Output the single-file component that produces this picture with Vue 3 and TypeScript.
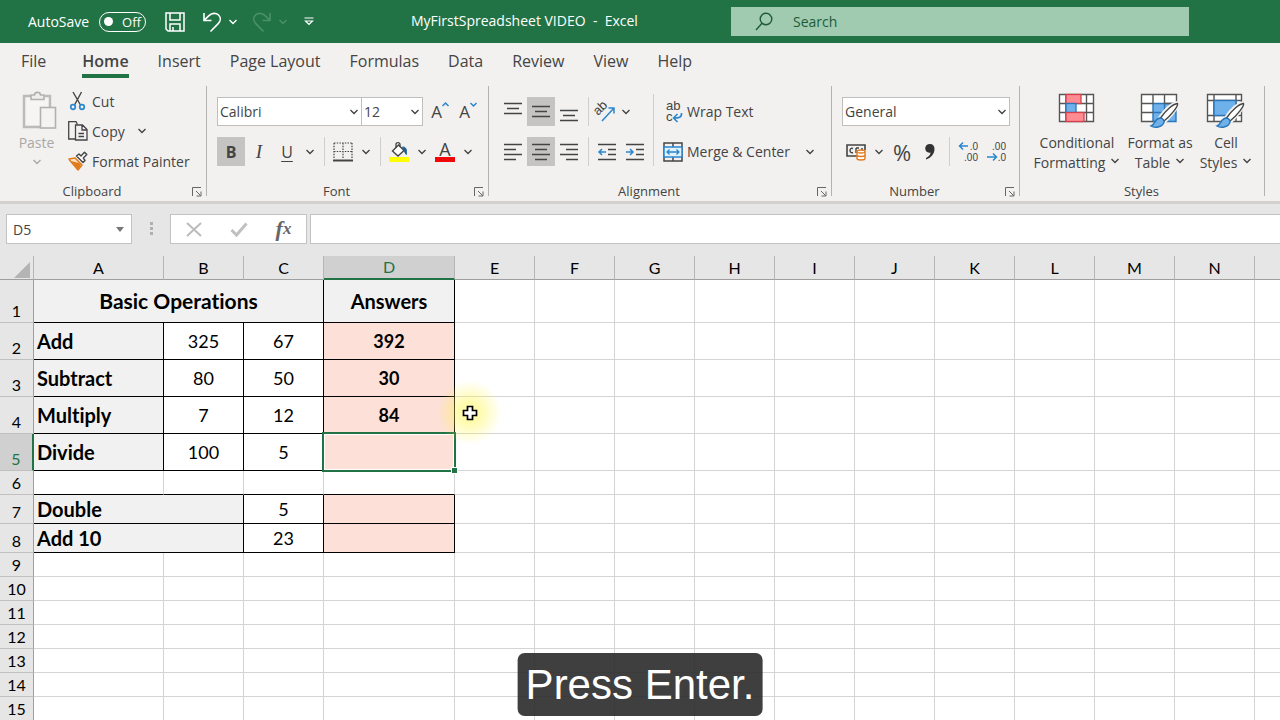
<script setup lang="ts">
import { h, ref } from 'vue'

interface Cell {
  key: string
  text?: string
  kind?: string
  span?: number
  selected?: boolean
}
interface Row {
  n: number
  size: string
  cells: Cell[]
}

const Chevron = () =>
  h('svg', { class: 'chevron', viewBox: '0 0 10 6', 'aria-hidden': 'true' }, [
    h('path', { d: 'M1.5 1 L5 4.5 L8.5 1', fill: 'none', stroke: 'currentColor', 'stroke-width': '1.4' }),
  ])

const Launcher = () =>
  h('svg', { class: 'launcher', viewBox: '0 0 10 10', 'aria-hidden': 'true' }, [
    h('path', {
      d: 'M0.5 9 V0.5 H9 M4 4 L8.5 8.5 M9 4.5 V9 H4.5',
      fill: 'none',
      stroke: 'currentColor',
      'stroke-width': '1',
    }),
  ])

const tabs = ['File', 'Home', 'Insert', 'Page Layout', 'Formulas', 'Data', 'Review', 'View', 'Help']
const activeTab = ref('Home')
const autoSave = ref(false)
const fontName = ref('Calibri')
const fontSize = ref('12')
const numberFormat = ref('General')
const cellName = ref('D5')
const formula = ref('')
const search = ref('')

const columns = 'ABCDEFGHIJKLMN'.split('')
const blanks = (n: number, from: string): Cell[] =>
  [...columns.slice(columns.indexOf(from)), 'O'].map((c) => ({ key: c + n }))

const operation = (n: number, label: string, a: string, b: string, answer = '', selected = false): Row => ({
  n,
  size: 'tall',
  cells: [
    { key: 'A' + n, text: label, kind: 'boxed label' },
    { key: 'B' + n, text: a, kind: 'boxed' },
    { key: 'C' + n, text: b, kind: 'boxed' },
    { key: 'D' + n, text: answer, kind: 'boxed answer', selected },
    ...blanks(n, 'E'),
  ],
})
const single = (n: number, label: string, value: string): Row => ({
  n,
  size: 'medium',
  cells: [
    { key: 'A' + n, text: label, kind: 'boxed label', span: 2 },
    { key: 'C' + n, text: value, kind: 'boxed' },
    { key: 'D' + n, kind: 'boxed answer' },
    ...blanks(n, 'E'),
  ],
})

const rows: Row[] = [
  {
    n: 1,
    size: 'title-row',
    cells: [
      { key: 'A1', text: 'Basic Operations', kind: 'boxed heading large', span: 3 },
      { key: 'D1', text: 'Answers', kind: 'boxed heading' },
      ...blanks(1, 'E'),
    ],
  },
  operation(2, 'Add', '325', '67', '392'),
  operation(3, 'Subtract', '80', '50', '30'),
  operation(4, 'Multiply', '7', '12', '84'),
  operation(5, 'Divide', '100', '5', '', true),
  { n: 6, size: 'short', cells: blanks(6, 'A').map((c, i) => (i < 4 ? { ...c, kind: 'ruled' } : c)) },
  single(7, 'Double', '5'),
  single(8, 'Add 10', '23'),
  ...[9, 10, 11, 12, 13, 14, 15].map((n) => ({ n, size: 'short', cells: blanks(n, 'A') })),
]
</script>

<template>
  <div class="app">
    <header class="titlebar">
      <div class="quick">
        <span id="autosave">AutoSave</span>
        <button class="switch" role="switch" :aria-checked="autoSave" aria-labelledby="autosave" @click="autoSave = !autoSave">
          <i class="knob"></i>{{ autoSave ? 'On' : 'Off' }}
        </button>
        <button class="save" aria-label="Save">
          <svg width="22" height="22" viewBox="0 0 22 22" fill="none" stroke="currentColor" stroke-width="1.5">
            <path d="M2 2 H20 V20 H4 L2 18 Z M6 2 V9 H16 V2 M6 20 V13 H16 V20 M9 20 V16" />
          </svg>
        </button>
        <button class="undo" aria-label="Undo">
          <svg width="20" height="22" viewBox="0 0 20 22" fill="none" stroke="currentColor" stroke-width="1.6">
            <path d="M2 2 V9.5 H9.5 M2.2 9.2 L7 4.6 C10 1.8 14 1.6 16.5 4 C19 6.5 18.8 10 16.2 12.6 L8.5 20.5" />
          </svg>
          <Chevron />
        </button>
        <button class="redo" aria-label="Redo">
          <svg width="20" height="22" viewBox="0 0 20 22" fill="none" stroke="currentColor" stroke-width="1.6">
            <path d="M18 2 V9.5 H10.5 M17.8 9.2 L13 4.6 C10 1.8 6 1.6 3.5 4 C1 6.5 1.2 10 3.8 12.6 L11.5 20.5" />
          </svg>
          <Chevron />
        </button>
        <button class="customize" aria-label="Customize Quick Access Toolbar">
          <svg width="10" height="9" viewBox="0 0 10 9" fill="none" stroke="currentColor" stroke-width="1.2">
            <path d="M0.5 1 H9.5 M1.5 4 H8.5 L5 7.5 Z" />
          </svg>
        </button>
      </div>
      <div class="doc">MyFirstSpreadsheet VIDEO&nbsp; -&nbsp; Excel</div>
      <label class="search">
        <svg width="18" height="19" viewBox="0 0 18 19" fill="none" stroke="currentColor" stroke-width="1.4">
          <circle cx="11" cy="7" r="5.8" />
          <path d="M7 11.2 L1 18" />
        </svg>
        <input v-model="search" type="search" placeholder="Search" aria-label="Search" />
      </label>
    </header>

    <nav class="tabs">
      <button v-for="t in tabs" :key="t" :class="{ active: t === activeTab }" @click="activeTab = t">{{ t }}</button>
    </nav>

    <section class="ribbon">
      <div class="group clipboard">
        <div class="body">
          <button class="paste">
            <svg width="36" height="40" viewBox="0 0 36 40" fill="none" stroke="#b3b1af" stroke-width="1.6">
              <path d="M9 5 H2 V36 H18 M23 5 H28 V16" stroke="#bdbbb9" stroke-width="2.4" />
              <path d="M4.500 7 H26 V16 H18 V34 H4.500 Z" fill="#f6f5f4" stroke="none" />
              <path d="M9 8.500 V4 H12.500 C12.500 0.500 18.500 0.500 18.500 4 H22 V8.500 Z" fill="#efeeed" />
              <rect x="18.500" y="16.500" width="15" height="20.500" fill="#f4f3f2" />
            </svg>
            <span>Paste</span>
            <Chevron />
          </button>
          <div class="stack">
            <button>
              <svg width="20" height="20" viewBox="0 0 20 20" fill="none" stroke-width="1.4">
                <path d="M5 1 L12.500 14 M13.500 1 L6.500 14" stroke="#444" />
                <circle cx="5" cy="16" r="2.300" stroke="#2a86cf" stroke-width="1.700" />
                <circle cx="14" cy="16" r="2.300" stroke="#2a86cf" stroke-width="1.700" />
              </svg>
              Cut
            </button>
            <button>
              <svg width="20" height="20" viewBox="0 0 20 20" fill="none" stroke="#444" stroke-width="1.300">
                <path d="M7 18 H0.700 V0.700 H8 L9.500 3.500" />
                <path d="M7.500 4 H14.500 L19 8.500 V19 H7.500 Z M14 4 V9 H19 M10.500 12.500 H16 M10.500 15.500 H16" />
              </svg>
              Copy
              <Chevron class="after" />
            </button>
            <button>
              <svg width="20" height="20" viewBox="0 0 20 20" fill="none" stroke-linejoin="round">
                <path d="M1 8 L7 7 L14 14 L10 19 L1.500 9 Z" fill="#fbe3cd" stroke="#e07b1c" stroke-width="1.500" />
                <path d="M3 10 L11 12 L13 14 L10 18.500 Z" fill="#e07b1c" />
                <path d="M8.500 5 L11 3 L13 5 L16.500 1.200 L18.800 3.500 L15.300 7 L17 9.500 L15 11.500 Z" fill="#fff" stroke="#444" stroke-width="1.400" />
              </svg>
              Format Painter
            </button>
          </div>
        </div>
        <footer>Clipboard<button aria-label="Clipboard settings"><Launcher /></button></footer>
      </div>

      <div class="group font">
        <div class="body rows">
          <div class="row">
            <label class="picker name">
              <select v-model="fontName" aria-label="Font"><option>Calibri</option></select><Chevron />
            </label>
            <label class="picker size">
              <select v-model="fontSize" aria-label="Font size"><option>12</option></select><Chevron />
            </label>
            <button class="tool grow" aria-label="Increase font size">
              <span>A</span>
              <svg width="7" height="5" viewBox="0 0 7 5" fill="none" stroke="#2a86cf" stroke-width="1.500"><path d="M0.500 4 L3.500 1 L6.500 4" /></svg>
            </button>
            <button class="tool grow" aria-label="Decrease font size">
              <span>A</span>
              <svg width="7" height="5" viewBox="0 0 7 5" fill="none" stroke="#2a86cf" stroke-width="1.500"><path d="M0.500 1 L3.500 4 L6.500 1" /></svg>
            </button>
          </div>
          <div class="row">
            <button class="tool on bold">B</button>
            <button class="tool italic">I</button>
            <button class="tool underline">U</button>
            <button class="drop" aria-label="Underline styles"><Chevron /></button>
            <i class="sep"></i>
            <button class="tool" aria-label="Borders">
              <svg width="20" height="20" viewBox="0 0 20 20" fill="none" stroke="#444">
                <path d="M1 1 H19 M1 1 V17 M19 1 V17 M10 1 V17 M1 9.500 H19" stroke-width="1.200" stroke-dasharray="1.500 1.200" />
                <path d="M0 18.500 H20" stroke-width="2" />
              </svg>
            </button>
            <button class="drop" aria-label="Border styles"><Chevron /></button>
            <i class="sep"></i>
            <button class="tool" aria-label="Fill color">
              <svg width="20" height="20" viewBox="0 0 20 20" fill="none">
                <path d="M3.500 9 L9.500 3 L15 8.500 L9 14 Z" fill="#fff" stroke="#444" stroke-width="1.400" />
                <path d="M7 6 V2.500 C7 0 11 0 11 2.500 V5" stroke="#444" stroke-width="1.300" />
                <path d="M13.500 5 C17.500 5 17.800 8 17.300 12.500 C15.500 10.500 15.500 8 13.500 5 Z" fill="#1e5f96" stroke="#1e5f96" />
                <rect y="15" width="20" height="5" fill="#ffff00" />
              </svg>
            </button>
            <button class="drop" aria-label="Fill colors"><Chevron /></button>
            <button class="tool color" aria-label="Font color"><span>A</span></button>
            <button class="drop" aria-label="Font colors"><Chevron /></button>
          </div>
        </div>
        <footer>Font<button aria-label="Font settings"><Launcher /></button></footer>
      </div>

      <div class="group alignment">
        <div class="body">
          <div class="rows">
            <div class="row">
              <button class="tool" aria-label="Top align">
                <svg width="18" height="20" viewBox="0 0 18 20" stroke="#444" stroke-width="1.500"><path d="M0 1.500 H18 M3 6.500 H15 M0 11.500 H18" /></svg>
              </button>
              <button class="tool on" aria-label="Middle align">
                <svg width="18" height="20" viewBox="0 0 18 20" stroke="#444" stroke-width="1.500"><path d="M0 4.500 H18 M3 9.500 H15 M0 14.500 H18" /></svg>
              </button>
              <button class="tool" aria-label="Bottom align">
                <svg width="18" height="20" viewBox="0 0 18 20" stroke="#444" stroke-width="1.500"><path d="M0 8.500 H18 M3 13.500 H15 M0 18.500 H18" /></svg>
              </button>
              <i class="sep"></i>
              <button class="tool orient" aria-label="Orientation">
                <svg width="22" height="22" viewBox="0 0 22 22" fill="none">
                  <text x="4" y="15" transform="rotate(-45 4 15)" class="ab">ab</text>
                  <path d="M8 20 L20 7 M14.500 7 H20 V12.500" stroke="#2a86cf" stroke-width="1.500" />
                </svg>
              </button>
              <button class="drop" aria-label="Orientation options"><Chevron /></button>
            </div>
            <div class="row">
              <button class="tool" aria-label="Align left">
                <svg width="18" height="18" viewBox="0 0 18 18" stroke="#444" stroke-width="1.500"><path d="M0 1.500 H18 M0 6.500 H12 M0 11.500 H18 M0 16.500 H12" /></svg>
              </button>
              <button class="tool on" aria-label="Center">
                <svg width="18" height="18" viewBox="0 0 18 18" stroke="#444" stroke-width="1.500"><path d="M0 1.500 H18 M3 6.500 H15 M0 11.500 H18 M3 16.500 H15" /></svg>
              </button>
              <button class="tool" aria-label="Align right">
                <svg width="18" height="18" viewBox="0 0 18 18" stroke="#444" stroke-width="1.500"><path d="M0 1.500 H18 M6 6.500 H18 M0 11.500 H18 M6 16.500 H18" /></svg>
              </button>
              <i class="sep"></i>
              <button class="tool" aria-label="Decrease indent">
                <svg width="18" height="18" viewBox="0 0 18 18" fill="none" stroke="#444" stroke-width="1.500">
                  <path d="M0 1.500 H18 M10 6.500 H18 M10 11.500 H18 M0 16.500 H18" /><path d="M8 9 H1 M4 6 L1 9 L4 12" stroke="#2a86cf" />
                </svg>
              </button>
              <button class="tool" aria-label="Increase indent">
                <svg width="18" height="18" viewBox="0 0 18 18" fill="none" stroke="#444" stroke-width="1.500">
                  <path d="M0 1.500 H18 M10 6.500 H18 M10 11.500 H18 M0 16.500 H18" /><path d="M0 9 H7 M4 6 L7 9 L4 12" stroke="#2a86cf" />
                </svg>
              </button>
            </div>
          </div>
          <div class="rows wide">
            <button class="row text">
              <svg width="20" height="24" viewBox="0 0 20 24" fill="none">
                <text x="3" y="10" class="ab">ab</text>
                <text x="3" y="21" class="ab">c</text>
                <path d="M18.500 13 C19 17.500 15.500 18 11 18 M14.500 14 L10.500 18 L14.500 22" stroke="#2a86cf" stroke-width="1.600" />
              </svg>
              Wrap Text
            </button>
            <button class="row text">
              <svg width="20" height="20" viewBox="0 0 20 20" fill="none">
                <path d="M1 1 H19 V19 H1 Z M10 1 V5 M10 15 V19" stroke="#444" stroke-width="1.500" />
                <rect x="1" y="5" width="18" height="10" fill="#e3f1fb" stroke="#2a86cf" stroke-width="1.500" />
                <path d="M4 10 H16 M6.500 7.500 L4 10 L6.500 12.500 M13.500 7.500 L16 10 L13.500 12.500" stroke="#2a86cf" stroke-width="1.300" />
              </svg>
              Merge &amp; Center
              <Chevron class="after" />
            </button>
          </div>
        </div>
        <footer>Alignment<button aria-label="Alignment settings"><Launcher /></button></footer>
      </div>

      <div class="group number">
        <div class="body rows">
          <div class="row">
            <label class="picker format">
              <select v-model="numberFormat" aria-label="Number format"><option>General</option></select><Chevron />
            </label>
          </div>
          <div class="row">
            <button class="tool" aria-label="Accounting format">
              <svg width="20" height="18" viewBox="0 0 20 18" fill="none">
                <path d="M11 13 H1 V2 H19 V7" stroke="#444" stroke-width="1.600" />
                <path d="M7 5.500 C3 4 3 11 7 9.500 M10 5 V10 M10 5 H13 M15 6 H17" stroke="#444" stroke-width="1.400" />
                <path d="M11 8.500 V15.500 C11 17.500 19 17.500 19 15.500 V8.500 Z" fill="#fff" stroke="#e07b1c" stroke-width="1.400" />
                <ellipse cx="15" cy="8.500" rx="4" ry="1.500" fill="#fff" stroke="#e07b1c" stroke-width="1.300" />
                <path d="M11 12 C11 14 19 14 19 12" stroke="#e07b1c" stroke-width="1.400" />
              </svg>
            </button>
            <button class="drop" aria-label="Accounting formats"><Chevron /></button>
            <button class="tool percent">%</button>
            <button class="tool" aria-label="Comma style">
              <svg width="12" height="18" viewBox="0 0 12 18"><path d="M6 1 C9 1 10.500 3 10.500 6 C10.500 11 7 15 2 16.500 V15 C5 13.500 6.500 11.500 6.500 9.500 C3.500 10.300 1.200 8.200 1.200 5.500 C1.200 3 3 1 6 1 Z" fill="#333" /></svg>
            </button>
            <i class="sep"></i>
            <button class="tool" aria-label="Increase decimal">
              <svg width="20" height="24" viewBox="0 0 20 24" fill="none">
                <text x="20" y="10" class="digits">.0</text><text x="20" y="21" class="digits">.00</text>
                <path d="M10 6 H1.500 M5 2.500 L1.500 6 L5 9.500" stroke="#2a86cf" stroke-width="1.500" />
              </svg>
            </button>
            <button class="tool" aria-label="Decrease decimal">
              <svg width="20" height="24" viewBox="0 0 20 24" fill="none">
                <text x="20" y="10" class="digits">.00</text><text x="20" y="21" class="digits">.0</text>
                <path d="M1 17 H10 M7 13.500 L10.500 17 L7 20.500" stroke="#2a86cf" stroke-width="1.500" />
              </svg>
            </button>
          </div>
        </div>
        <footer>Number<button aria-label="Number settings"><Launcher /></button></footer>
      </div>

      <div class="group styles">
        <div class="body">
          <button class="big conditional">
            <svg width="38" height="36" viewBox="0 0 38 36" fill="none">
              <rect x="1.500" y="1.500" width="34" height="27" fill="#fff" />
              <path d="M1.500 1.500 H35.500 V28.500 H1.500 Z M1.500 10.500 H35.500 M1.500 19.500 H35.500 M8 1.500 V28.500 M28.500 1.500 V28.500" stroke="#555" stroke-width="1.400" />
              <rect x="8" y="1.500" width="15" height="9" fill="#ff8b93" stroke="#d6404a" stroke-width="1.300" />
              <rect x="8" y="10.500" width="10" height="9" fill="#6fb1ea" stroke="#2a76b8" stroke-width="1.300" />
              <rect x="8" y="19.500" width="18" height="9" fill="#ff8b93" stroke="#d6404a" stroke-width="1.300" />
            </svg>
            <span>Conditional</span><span>Formatting <Chevron /></span>
          </button>
          <button class="big table">
            <svg width="40" height="36" viewBox="0 0 40 36" fill="none">
              <rect x="1.500" y="1.500" width="35" height="27" fill="#fff" />
              <rect x="13" y="10.500" width="23" height="18" fill="#6fb1ea" />
              <path d="M13 10.500 V28.500 H36 V10.500 Z M13 19.500 H36 M24.500 10.500 V28.500" stroke="#2a76b8" stroke-width="1.400" />
              <path d="M13 28.500 H1.500 V1.500 H36.500 V10 M1.500 10.500 H13 M1.500 19.500 H13 M13 1.500 V10.500 M24.500 1.500 V10.500 M24 10.500 H36" stroke="#555" stroke-width="1.400" />
              <path d="M20 25 C26 16 32 11 37.500 10 C38.500 13 31 22 24.500 28.500 Z" fill="#fff" stroke="#f2f1f0" stroke-width="4" />
              <path d="M20.500 25 C26 17 33 11 37.500 10.500 C38.500 13 31 22.500 24 28 Z" fill="#fff" stroke="#444" stroke-width="1.400" />
              <path d="M20 25 C23 25 25 28 23.500 30.500 C21 35 14 35 11 33 C15 32 14 26 20 25 Z" fill="#6fb1ea" stroke="#2a76b8" stroke-width="1.400" />
            </svg>
            <span>Format as</span><span>Table <Chevron /></span>
          </button>
          <button class="big cell">
            <svg width="40" height="36" viewBox="0 0 40 36" fill="none">
              <rect x="1.500" y="1.500" width="34" height="27" fill="#fff" />
              <path d="M1.500 1.500 H35.500 V28.500 H1.500 Z M8 1.500 V28.500 M30 1.500 V28.500 M1.500 7.500 H35.500 M1.500 22.500 H35.500" stroke="#555" stroke-width="1.400" />
              <rect x="8" y="7.500" width="22" height="15" fill="#6fb1ea" stroke="#2a76b8" stroke-width="1.400" />
              <path d="M20 25 C26 16 32 11 37.500 10 C38.500 13 31 22 24.500 28.500 Z" fill="#fff" stroke="#f2f1f0" stroke-width="4" />
              <path d="M20.500 25 C26 17 33 11 37.500 10.500 C38.500 13 31 22.500 24 28 Z" fill="#fff" stroke="#444" stroke-width="1.400" />
              <path d="M20 25 C23 25 25 28 23.500 30.500 C21 35 14 35 11 33 C15 32 14 26 20 25 Z" fill="#6fb1ea" stroke="#2a76b8" stroke-width="1.400" />
            </svg>
            <span>Cell</span><span>Styles <Chevron /></span>
          </button>
        </div>
        <footer>Styles</footer>
      </div>
    </section>

    <section class="formula-bar">
      <div class="name-box">
        <input v-model="cellName" aria-label="Name box" />
        <button aria-label="Names"><svg width="8" height="5" viewBox="0 0 8 5"><path d="M0 0 H8 L4 5 Z" fill="#777" /></svg></button>
      </div>
      <svg class="grip" width="4" height="14" viewBox="0 0 4 14" fill="#b0b0b0"><path d="M0 0 H3 V3 H0 Z M0 5 H3 V8 H0 Z M0 10 H3 V13 H0 Z" /></svg>
      <div class="fx">
        <button aria-label="Cancel"><svg width="16" height="15" viewBox="0 0 16 15" stroke="#bcbcbc" stroke-width="2"><path d="M1 1 L15 14 M15 1 L1 14" /></svg></button>
        <button aria-label="Enter"><svg width="18" height="15" viewBox="0 0 18 15" fill="none" stroke="#c0c0c0" stroke-width="3"><path d="M1.500 8 L6.500 13 L16.500 1.500" /></svg></button>
        <button class="insert-fn" aria-label="Insert function"><em>f</em><em class="x">x</em></button>
      </div>
      <input v-model="formula" class="formula" aria-label="Formula bar" />
    </section>

    <main class="sheet">
      <table>
        <colgroup>
          <col class="c-head" /><col class="c-a" /><col v-for="i in 2" :key="i" class="c-std" /><col class="c-d" />
          <col v-for="i in 10" :key="i" class="c-std" /><col />
        </colgroup>
        <thead>
          <tr>
            <th class="corner"><svg width="16" height="16" viewBox="0 0 16 16"><path d="M16 0 V16 H0 Z" fill="#b4b4b4" /></svg></th>
            <th v-for="c in columns" :key="c" :class="{ current: c === 'D' }">{{ c }}</th>
            <th></th>
          </tr>
        </thead>
        <tbody>
          <tr v-for="r in rows" :key="r.n" :class="r.size">
            <th scope="row" :class="{ current: r.n === 5 }">{{ r.n }}</th>
            <td v-for="c in r.cells" :key="c.key" :class="[c.kind, { selected: c.selected }]" :colspan="c.span ?? 1">
              {{ c.text }}<div v-if="c.selected" class="selection"></div>
            </td>
          </tr>
        </tbody>
      </table>
      <div class="pointer">
        <svg width="16" height="16" viewBox="0 0 16 16"><path d="M5.500 1.500 H10.500 V5.500 H14.500 V10.500 H10.500 V14.500 H5.500 V10.500 H1.500 V5.500 H5.500 Z" fill="#fff" stroke="#000" stroke-width="1.700" /></svg>
      </div>
    </main>

    <div class="caption">Press Enter.</div>
  </div>
</template>

<style>
body { margin: 0; }
</style>

<style scoped>
.app { position: relative; display: flex; flex-direction: column; height: 100vh; overflow: hidden; background: #fff; color: #444; font-family: "Open Sans", "Noto Sans", sans-serif; font-size: 14px; }
.app *, .app *::before, .app *::after { box-sizing: border-box; }
button, input, select { margin: 0; padding: 0; border: 0; background: none; color: inherit; font: inherit; }
button { display: flex; align-items: center; justify-content: center; white-space: nowrap; }
svg { flex: none; display: block; overflow: visible; }
.chevron { width: 10px; height: 6px; }
.launcher { width: 10px; height: 10px; color: #666; }

.titlebar { display: flex; align-items: center; flex: none; height: 43px; background: #217346; color: #fff; }
.quick { display: flex; align-items: center; flex: none; width: 411px; padding-left: 28px; }
.quick > span { width: 64px; margin-right: 7px; white-space: nowrap; }
.switch { gap: 9px; width: 47px; height: 20px; border: 1px solid #fff; border-radius: 10px; font-size: 13px; }
.knob { width: 9px; height: 9px; border-radius: 50%; background: #fff; }
.save { margin-left: 18px; }
.undo { gap: 6px; margin-left: 16px; }
.redo { gap: 6px; margin-left: 14px; color: #4a9069; }
.customize { margin-left: 16px; }
.doc { flex: none; width: 320px; padding-bottom: 2px; white-space: nowrap; }
.search { display: flex; align-items: center; flex: 1; gap: 20px; height: 29px; margin-right: 91px; padding-left: 24px; background: #a0cbb1; color: #1d5c39; }
.search input { flex: 1; min-width: 0; outline: none; }
.search input::placeholder { color: #1d5c39; opacity: 1; }

.tabs { display: flex; align-items: flex-start; flex: none; gap: 29px; height: 41px; padding: 6px 21px 0; background: #f2f1f0; font-size: 16px; }
.tabs button { height: 29px; border-bottom: 4px solid transparent; line-height: 25px; }
.tabs button:first-child { margin-right: 7px; }
.tabs .active { border-color: #217346; font-weight: 600; }

.ribbon { display: flex; flex: none; height: 120px; border-bottom: 3px solid #d2d1d0; background: #f2f1f0; }
.group { position: relative; display: flex; flex-direction: column; flex: none; }
.group::after { content: ""; position: absolute; top: 2px; right: 0; bottom: 5px; width: 1px; background: #b5b3b1; }
.clipboard { width: 207px; }
.font { width: 282px; padding-left: 10px; }
.alignment { width: 343px; padding-left: 10px; }
.number { width: 188px; padding-left: 10px; }
.styles { width: 245px; padding-left: 10px; }
.body { display: flex; flex: 1; }
.group footer { position: relative; display: flex; justify-content: center; height: 20px; font-size: 13px; line-height: 20px; }
.clipboard footer { padding-right: 23px; }
.font footer, .alignment footer, .number footer { padding-right: 33px; }
.styles footer { padding-right: 12px; }
.group footer button { position: absolute; top: 6px; right: 5px; }

.paste { flex-direction: column; justify-content: flex-start; width: 57px; padding: 7px 0 0 16px; color: #aaa8a6; }
.paste span { line-height: 20px; margin-bottom: 6px; }
.paste svg:first-child { margin-bottom: 2px; margin-left: 6px; }
.stack { display: flex; flex-direction: column; padding: 2px 0 0 11px; }
.stack button { justify-content: flex-start; gap: 4px; height: 30px; }
.after { margin-left: 8px; }

.rows { display: flex; flex-direction: column; gap: 11px; padding-top: 13px; }
.row { display: flex; align-items: center; height: 29px; }
.picker { position: relative; display: flex; align-items: center; height: 29px; border: 1px solid #c1bfbd; background: #fff; }
.picker select { width: 100%; height: 27px; padding-left: 2px; appearance: none; outline: none; }
.picker .chevron { position: absolute; right: 2px; pointer-events: none; }
.name { width: 145px; }
.size { width: 62px; margin-left: -1px; margin-right: 3px; }
.format { width: 168px; }
.tool { flex: none; width: 28px; height: 29px; }
.on { background: #c6c4c3; }
.grow { font-size: 17px; }
.grow svg { margin-bottom: 14px; }
.bold { font-weight: 700; font-size: 16px; }
.italic { font-family: "Liberation Serif", serif; font-style: italic; font-size: 19px; }
.underline { font-size: 16px; text-decoration: underline; text-underline-offset: 3px; }
.drop { width: 18px; height: 29px; }
.sep { align-self: stretch; flex: none; width: 1px; margin: 0 4px 0 5px; background: #d0cecd; }
.color span { width: 20px; border-bottom: 5px solid #f00808; font-size: 18px; line-height: 16px; }
.orient { width: 24px; }
.wide { align-self: flex-start; width: 168px; margin: 10px 0 0 4px; padding-top: 3px; border-left: 1px solid #d0cecd; }
.text { justify-content: flex-start; gap: 4px; padding-left: 9px; }
.wide .after { margin-left: 11px; }
.ab { font-family: "Liberation Sans", Arial, sans-serif; font-size: 13px; fill: #444; }
.digits { font-family: "Liberation Sans", Arial, sans-serif; font-size: 10px; fill: #444; text-anchor: end; }
.percent { font-size: 22px; }
.big { flex-direction: column; justify-content: flex-start; padding-top: 9px; line-height: 20px; }
.big svg:first-child { margin-bottom: 4px; }
.big span { display: flex; align-items: center; gap: 5px; }
.conditional { width: 94px; }
.table { width: 72px; }
.cell { width: 60px; }

.formula-bar { display: flex; align-items: center; flex: none; height: 52px; padding: 0 0 2px 6px; background: #e6e6e6; }
.name-box { display: flex; width: 126px; height: 30px; border: 1px solid #c3c3c3; background: #fff; }
.name-box input { flex: 1; min-width: 0; padding-left: 6px; outline: none; }
.name-box button { width: 22px; }
.grip { margin: 0 16px 0 18px; }
.fx { display: flex; width: 137px; height: 30px; margin-right: 3px; border: 1px solid #c3c3c3; background: #fff; }
.fx button { flex: none; width: 45px; }
.insert-fn { color: #666; font: italic 700 22px "Liberation Serif", serif; }
.insert-fn .x { font-size: 17px; }
.formula { flex: 1; min-width: 0; height: 30px; border: 1px solid #c3c3c3; border-right: 0; background: #fff; outline: none; }

.sheet { position: relative; flex: 1; min-height: 0; overflow: hidden; font-family: Lato, "Open Sans", sans-serif; font-size: 18px; color: #000; }
table { width: 100%; border-collapse: separate; border-spacing: 0; table-layout: fixed; line-height: 20px; }
.c-head { width: 34px; }
.c-a { width: 130px; }
.c-std { width: 80px; }
.c-d { width: 131px; }
th, td { padding: 0; overflow: visible; border-right: 1px solid #d4d4d4; border-bottom: 1px solid #d4d4d4; white-space: nowrap; }
th { background: #e6e6e6; font-weight: 400; font-size: 16px; }
thead tr { height: 24px; }
thead th { border-color: #9f9f9f; border-right-color: #b5b5b5; }
thead .current { border-bottom: 2px solid #217346; background: #d0d0d0; color: #217346; }
.corner svg { margin: 4px 0 0 14px; }
tbody th { padding-bottom: 1px; border-right-color: #9f9f9f; border-bottom-color: #c0c0c0; vertical-align: bottom; }
tbody .current { border-right: 2px solid #217346; background: #d0d0d0; color: #217346; }
tr > :last-child { border-right: 0; }
td { text-align: center; }
.title-row { height: 43px; }
.tall { height: 37px; }
.medium { height: 29px; }
.short { height: 24px; }
.boxed { border-color: #000; }
.ruled { border-bottom-color: #000; }
.label { padding-left: 3px; background: #f1f1f1; font-size: 20px; font-weight: 700; text-align: left; }
.heading { background: #f1f1f1; font-size: 20px; font-weight: 700; }
.large { font-size: 21px; }
.label, .heading { font-variant-ligatures: none; }
.answer { background: #fde0d7; font-weight: 700; }
.selected { position: relative; z-index: 1; }
.selection { position: absolute; inset: -2px; border: 2px solid #217346; box-shadow: inset 0 0 0 1px #fff; }
.selection::after { content: ""; position: absolute; right: -4px; bottom: -4px; width: 7px; height: 7px; border: 1px solid #fff; background: #217346; }
.pointer { position: absolute; z-index: 2; left: 435px; top: 122px; display: grid; place-items: center; width: 69px; height: 69px; background: radial-gradient(circle, rgba(255, 246, 70, .45) 0 20%, rgba(255, 246, 70, 0) 66%); }

.caption { position: absolute; z-index: 3; left: 50%; bottom: 4px; transform: translateX(-50%); padding: 0 8px; border-radius: 7px; background: rgba(42, 42, 42, .9); color: #fff; font: 42px/63px "Liberation Sans", Arial, sans-serif; white-space: nowrap; }
</style>
